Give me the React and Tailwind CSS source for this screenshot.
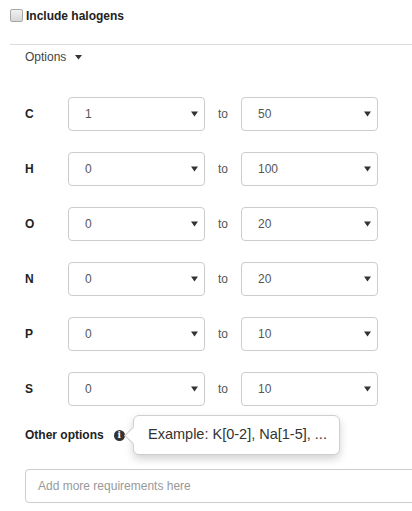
import React from "react";

const rows = [
  { el: "C", min: "1", max: "50" },
  { el: "H", min: "0", max: "100" },
  { el: "O", min: "0", max: "20" },
  { el: "N", min: "0", max: "20" },
  { el: "P", min: "0", max: "10" },
  { el: "S", min: "0", max: "10" },
];

const Caret = () => (
  <svg width="7" height="6" viewBox="0 0 7 6">
    <path d="M0 0.5 L7 0.5 L3.5 5.5 Z" fill="#333" />
  </svg>
);

const FakeSelect = ({ value }) => (
  <div className="w-[137px] h-[34px] border border-[#ccc] rounded-[4px] bg-white flex items-center justify-between pl-[16px] pr-[6px] text-[12px] text-[#555]">
    <span>{value}</span>
    <Caret />
  </div>
);

const App = () => {
  return (
    <div className="w-[412px] h-[511px] overflow-hidden bg-white text-[#333] text-[12px] font-['Liberation_Sans',Arial,sans-serif]">
      {/* Halogens checkbox */}
      <div className="h-[31px] pl-[10px] flex items-center">
        <div className="w-[13px] h-[13px] rounded-[2px] border border-[#a8a8a8] bg-gradient-to-b from-[#f1f1f1] to-[#d7d7d7]" />
        <span className="ml-[3px] font-bold text-[#222]">Include halogens</span>
      </div>

      <div className="mt-[13px] ml-[10px] border-t border-[#dcdcdc]" />

      {/* Options toggle */}
      <div className="h-[24px] pl-[25px] flex items-center text-[#444]">
        <span>Options</span>
        <span className="ml-[9px] mt-[1px]">
          <svg width="7" height="5" viewBox="0 0 7 5">
            <path d="M0 0 L7 0 L3.5 4.5 Z" fill="#333" />
          </svg>
        </span>
      </div>

      {/* Element ranges */}
      <div className="mt-[28px] flex flex-col gap-[21px]">
        {rows.map((r) => (
          <div key={r.el} className="h-[34px] pl-[25px] flex items-center">
            <span className="w-[43px] font-bold text-[#222]">{r.el}</span>
            <FakeSelect value={r.min} />
            <span className="w-[36px] pl-[13px] text-[#555]">to</span>
            <FakeSelect value={r.max} />
          </div>
        ))}
      </div>

      {/* Other options */}
      <div className="relative mt-[17px] h-[24px] pl-[25px] flex items-center">
        <span className="font-bold text-[#222]">Other options</span>
        <span className="ml-[10px] w-[11px] h-[11px] rounded-full bg-[#333] text-white text-[9px] font-bold leading-none flex items-center justify-center font-['DejaVu_Serif',serif]">
          i
        </span>

        {/* Tooltip */}
        <div className="absolute left-[133px] top-[-8px] w-[207px] h-[40px] bg-white border border-[#cfcfcf] rounded-[6px] shadow-[0_4px_8px_rgba(0,0,0,0.18)] flex items-center pl-[14px] text-[14.5px] text-[#333]">
          <div className="absolute left-[-7px] top-[13px] w-[13px] h-[13px] bg-white border-l border-b border-[#cfcfcf] rotate-45" />
          <span className="relative">Example: K[0-2], Na[1-5], ...</span>
        </div>
      </div>

      {/* Free text requirements */}
      <div className="mt-[22px] pl-[25px]">
        <div className="w-[400px] h-[34px] border border-[#ccc] rounded-[4px] flex items-center pl-[12px] text-[12px] text-[#999]">
          Add more requirements here
        </div>
      </div>
    </div>
  );
};

export default App;
